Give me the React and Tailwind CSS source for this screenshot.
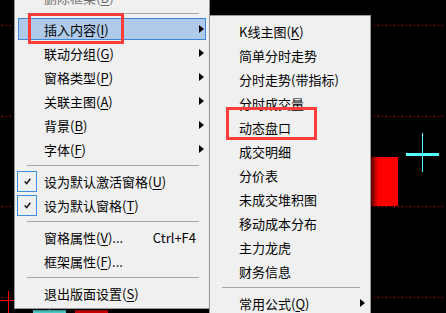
import React from 'react';

const FONT = '"Noto Sans CJK SC", "Noto Sans", "Liberation Sans", sans-serif';

const Arrow = () => (
  <svg width="5" height="8" viewBox="0 0 5 8" className="block">
    <polygon points="0,0 5,4 0,8" fill="#000" />
  </svg>
);

const Check = () => (
  <svg width="7" height="7" viewBox="0 0 7 7" className="block">
    <path d="M0.6 3.4 L2.6 5.6 L6.4 0.8" fill="none" stroke="#111" strokeWidth="1.4" />
  </svg>
);

const Label = ({ label, acc, suffix }) => (
  <span>
    {label}
    {acc && (
      <>
        (<u className="underline-offset-2">{acc}</u>)
      </>
    )}
    {suffix}
  </span>
);

const Item = ({ label, acc, suffix, arrow, checked, highlight, shortcut, muted }) => (
  <div className="h-6 py-px">
    <div
      className={
        'h-full flex items-center border ' +
        (highlight ? 'border-[#3d87d9] bg-[#b0cbe9]' : 'border-transparent')
      }
    >
      <div className="w-[25px] h-full flex items-center">
        {checked && (
          <div className="-ml-[2px] w-5 h-[21px] border border-[#3d8ee0] flex items-center justify-center">
            <Check />
          </div>
        )}
      </div>
      <div className={'flex-1 text-[13px] leading-none ' + (muted ? 'text-[#6d6d6d]' : 'text-black')}>
        <Label label={label} acc={acc} suffix={suffix} />
      </div>
      {shortcut && <div className="text-[13px] leading-none text-black">{shortcut}</div>}
      <div className="w-[9px] flex justify-end pr-px">{arrow && <Arrow />}</div>
    </div>
  </div>
);

const Sep = () => (
  <div className="h-2 flex items-center">
    <div className="h-px flex-1 ml-[9px] mr-[7px] bg-[#a8a8a8]" />
  </div>
);

const DotLine = ({ top }) => (
  <div
    className="absolute left-0 right-0 h-px bg-[repeating-linear-gradient(90deg,transparent_0_2px,#ff0000_2px_3px,transparent_3px_4px)]"
    style={{ top }}
  />
);

export default function App() {
  return (
    <div className="relative w-[446px] h-[313px] bg-black overflow-hidden" style={{ fontFamily: FONT }}>
      {/* chart behind the menus */}
      <DotLine top={25} />
      <DotLine top={116} />
      <DotLine top={206} />
      <DotLine top={297} />
      <div className="absolute left-[371px] top-[157px] w-[27px] h-[49px] bg-[#ff0000]" />
      <div className="absolute left-[422px] top-[133px] w-px h-[39px] bg-[#55ffff]" />
      <div className="absolute left-[406px] top-[153px] w-[33px] h-[3px] bg-[#55ffff]" />
      <div className="absolute left-[8px] top-[291px] w-px h-[22px] bg-[#ff0000]" />
      <div className="absolute left-0 top-[300px] w-[14px] h-px bg-[#ff0000]" />
      <div className="absolute left-[33px] top-[310px] w-[33px] h-[3px] bg-[#55dede]" />
      <div className="absolute left-[49px] top-[308px] w-px h-[2px] bg-[#55dede]" />
      <div className="absolute left-[75px] top-[310px] w-[33px] h-[3px] bg-[#e00000]" />
      <div className="absolute left-[132px] top-[308px] w-px h-px bg-[#ff0000]" />

      {/* main context menu */}
      <div className="absolute left-[14px] top-[-19px] w-[196px] bg-[#f0f0f0] border border-[#979797] p-[3px] shadow-[2px_2px_3px_rgba(0,0,0,0.5)]">
        <Item label="删除框架" acc="D" muted />
        <Sep />
        <Item label="插入内容" acc="I" arrow highlight />
        <Item label="联动分组" acc="G" arrow />
        <Item label="窗格类型" acc="P" arrow />
        <Item label="关联主图" acc="A" arrow />
        <Item label="背景" acc="B" arrow />
        <Item label="字体" acc="F" arrow />
        <Sep />
        <Item label="设为默认激活窗格" acc="U" checked />
        <Item label="设为默认窗格" acc="T" checked />
        <Sep />
        <Item label="窗格属性" acc="V" suffix="..." shortcut="Ctrl+F4" />
        <Item label="框架属性" acc="F" suffix="..." />
        <Sep />
        <Item label="退出版面设置" acc="S" />
      </div>

      {/* submenu */}
      <div className="absolute left-[209px] top-[15px] w-[162px] bg-[#f0f0f0] border border-[#979797] p-[3px] shadow-[4px_3px_4px_rgba(0,0,0,0.6)]">
        <Item label="K线主图" acc="K" />
        <Item label="简单分时走势" />
        <Item label="分时走势(带指标)" />
        <Item label="分时成交量" />
        <Item label="动态盘口" />
        <Item label="成交明细" />
        <Item label="分价表" />
        <Item label="未成交堆积图" />
        <Item label="移动成本分布" />
        <Item label="主力龙虎" />
        <Item label="财务信息" />
        <Sep />
        <Item label="常用公式" acc="Q" arrow />
      </div>

      {/* red annotation boxes */}
      <div className="absolute left-[28px] top-[13px] w-[96px] h-[31px] border-[3px] border-[#ff3c3c]" />
      <div className="absolute left-[226px] top-[107px] w-[91px] h-[33px] border-[3px] border-[#ff3c3c]" />
    </div>
  );
}
